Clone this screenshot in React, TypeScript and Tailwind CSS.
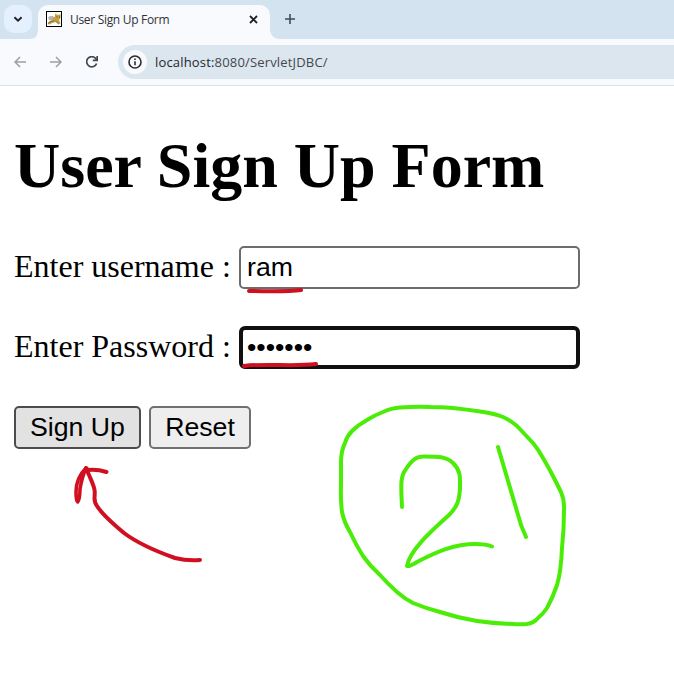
function TabStrip() {
  return (
    <div className="flex h-[39px] bg-[#d3e3f0]">
      <button aria-label="Search tabs" className="mt-[5px] ml-1 flex h-7 w-7 items-center justify-center rounded-[10px] bg-[#e4f0fd]">
        <svg width="10" height="8" viewBox="0 0 10 8" fill="none" stroke="#202124" strokeWidth="1.9">
          <path d="M1.4 2.2 5 5.7 8.6 2.2" />
        </svg>
      </button>
      <svg className="mt-[29px] -ml-[2px]" width="8" height="10" viewBox="0 0 8 10">
        <path d="M8 0v10H0c5 0 8-3 8-10Z" fill="#f8fafe" />
      </svg>
      <div className="mt-[5px] flex h-[34px] w-[232px] items-start rounded-t-[10px] bg-[#f8fafe] pt-[6px] pl-2">
        <svg width="16" height="16" viewBox="0 0 16 16">
          <rect x=".5" y=".5" width="15" height="15" fill="#fff" stroke="#000" />
          <path d="M2 6.5 4 5h3l2 3-3 2-3-1Z" fill="#b5b5b0" />
          <path d="M1.5 13 3 10.5 7 9l-.5-2L9 5.5 9 2.5l2 1.3h2L14.5 3v4L13 9l1.5 3.5-2 .8L10 11l-4 1-2 1.5Z" fill="#c5a045" />
          <path d="m2 12.5 3-2 3-.5M9.5 10l3 2.8" fill="none" stroke="#756442" strokeWidth=".9" />
          <path d="M10.5 6h1m1.5 0h1" stroke="#5c4a20" />
        </svg>
        <span className="ml-2 w-[172px] font-['Open_Sans',sans-serif] text-[12px] leading-[17px] tracking-[-0.31px] whitespace-nowrap text-[#303236]">User Sign Up Form</span>
        <svg className="mt-[4px] ml-[7px]" width="9" height="9" viewBox="0 0 9 9" stroke="#202124" strokeWidth="1.8">
          <path d="m1 1 7 7M8 1 1 8" />
        </svg>
      </div>
      <svg className="mt-[29px]" width="10" height="10" viewBox="0 0 10 10">
        <path d="M0 0v10h10C4 10 0 6 0 0Z" fill="#f8fafe" />
      </svg>
      <svg className="mt-[14px] ml-[5px]" width="10" height="10" viewBox="0 0 10 10" stroke="#414b55" strokeWidth="1.6">
        <path d="M5 0v10M0 5h10" />
      </svg>
    </div>
  );
}

function Toolbar() {
  return (
    <div className="flex h-[47px] items-center border-b border-[#dce2ea] bg-[#f8fafe] pl-[14px]">
      <svg width="12" height="12" viewBox="0 0 12 12" fill="none" stroke="#9b9fa4" strokeWidth="1.5">
        <path d="M12 6H1m5-5L1 6l5 5" />
      </svg>
      <svg className="ml-6" width="12" height="12" viewBox="0 0 12 12" fill="none" stroke="#9b9fa4" strokeWidth="1.5">
        <path d="M0 6h11M6 1l5 5-5 5" />
      </svg>
      <svg className="ml-6" width="12" height="12" viewBox="0 0 12 12" fill="none" stroke="#3f4951" strokeWidth="1.7">
        <path d="M10.6 7.4A5.1 5.1 0 1 1 9.6 2.4L11 4" />
        <path d="M11.2 0v4.4H6.8" />
      </svg>
      <div className="ml-5 flex h-[34px] flex-1 items-center rounded-l-full bg-[#dce6ef] pl-[5px]">
        <div className="flex h-6 w-6 items-center justify-center rounded-full bg-[#f8fafe]">
          <svg width="14" height="14" viewBox="0 0 14 14" fill="none" stroke="#292c30" strokeWidth="1.6">
            <circle cx="7" cy="7" r="6" />
            <path d="M7 6.2v4M7 3.6v1.5" />
          </svg>
        </div>
        <div className="ml-2 font-['Open_Sans',sans-serif] text-[13px] leading-5 tracking-[0.17px] whitespace-nowrap text-[#44484d]">
          <span className="text-[#24272a]">localhost:</span>8080/ServletJDBC/
        </div>
      </div>
    </div>
  );
}

function Annotations() {
  return (
    <svg className="pointer-events-none absolute inset-0" width="674" height="674" viewBox="0 0 674 674" fill="none" strokeLinecap="round" strokeLinejoin="round" strokeWidth="4">
      <g stroke="#d01020">
        <path d="M249 291C267 291 286 292 301 290" />
        <path d="M244 366C268 363 290 367 316 364" />
        <path strokeWidth="3.6" d="M86 468C79 475 76 482 76 492Q76 501 77.7 502Q79.8 500 80 489Q82 477 86 468" />
        <path d="M106.5 472Q97 469 88 470L86 468L89 475C92 482 95 488 94.7 492C95 498 93 501 97 506C104 517 115 525 124 533C140 545 158 552 175 558Q187 561 200 560" />
      </g>
      <g stroke="#4bed08">
        <path d="M400 407.5Q415 406.5 430 407Q442 407 453 408Q467 409.5 480 411.5C489 413 496 414 503 417Q510 420 517 426L533 443Q538 449 543 458Q549 468 555 480L561 492Q564.5 500 564 510Q564 530 562 548Q561 572 557 585Q553 597 547 608Q543 614 538 618Q534 623 527 624Q520 624.5 513 624Q494 623.5 477 621Q458 618 440 612Q425 608 413 603Q405 599 397 592Q388 584 380 575Q370 566 363 556Q356 545 350 532Q344 522 342 512Q340.5 501 341 485V462Q341 451 345 443Q347 436 352 431Q358 425 367 420Q375 415 383 412Q392 408 400 407.5Z" />
        <path d="M402 507C401 485 400 477 406 469C412 460 416 456.5 424 456.5C438 456.5 446 456.5 453 463C461 471 460 477 460 489C459 500 458 506 449 515C434 529 410 549 407 566Q409 567 417 562C438 551 455 544 475 544Q486 544 492 546.5" />
        <path d="M498 447L521 525L526 537" />
      </g>
    </svg>
  );
}

export default function App() {
  return (
    <div className="relative h-[674px] w-[674px] overflow-hidden bg-white">
      <TabStrip />
      <Toolbar />
      <form className="pt-[44px] pl-[14px] font-['Liberation_Serif',serif] text-[32px] text-black">
        <h1 className="h-[72px] text-[64px] leading-[72px] font-bold whitespace-nowrap">User Sign Up Form</h1>
        <div className="mt-[44px] flex h-[43px]">
          <label htmlFor="username" className="w-[225px] leading-[41px] whitespace-nowrap">Enter username :</label>
          <input id="username" defaultValue="ram" className="h-[43px] w-[341px] rounded-[5px] border-2 border-[#6c6c6c] bg-white px-[6px] pb-[1px] font-['Liberation_Sans',sans-serif] text-[26.67px] leading-[30px]" />
        </div>
        <div className="mt-[37px] flex h-[43px]">
          <label htmlFor="password" className="w-[225px] leading-[41px] whitespace-nowrap">Enter Password :</label>
          <input id="password" type="password" defaultValue="ram1234" className="h-[43px] w-[341px] rounded-[6px] border-4 border-[#101010] bg-white px-[4px] pb-[1px] font-['Liberation_Sans',sans-serif] text-[26.67px] leading-[30px]" />
        </div>
        <div className="mt-[37px] flex gap-2 font-['Liberation_Sans',sans-serif] text-[26.67px] leading-[37px]">
          <button type="button" className="h-[43px] w-[127px] rounded-[5px] border-2 border-[#4c4c4c] bg-[#e2e2e2] pb-[1px] whitespace-nowrap">Sign Up</button>
          <button type="button" className="h-[43px] w-[102px] rounded-[5px] border-2 border-[#707070] bg-[#eeeeee] pb-[1px] whitespace-nowrap">Reset</button>
        </div>
      </form>
      <Annotations />
    </div>
  );
}
